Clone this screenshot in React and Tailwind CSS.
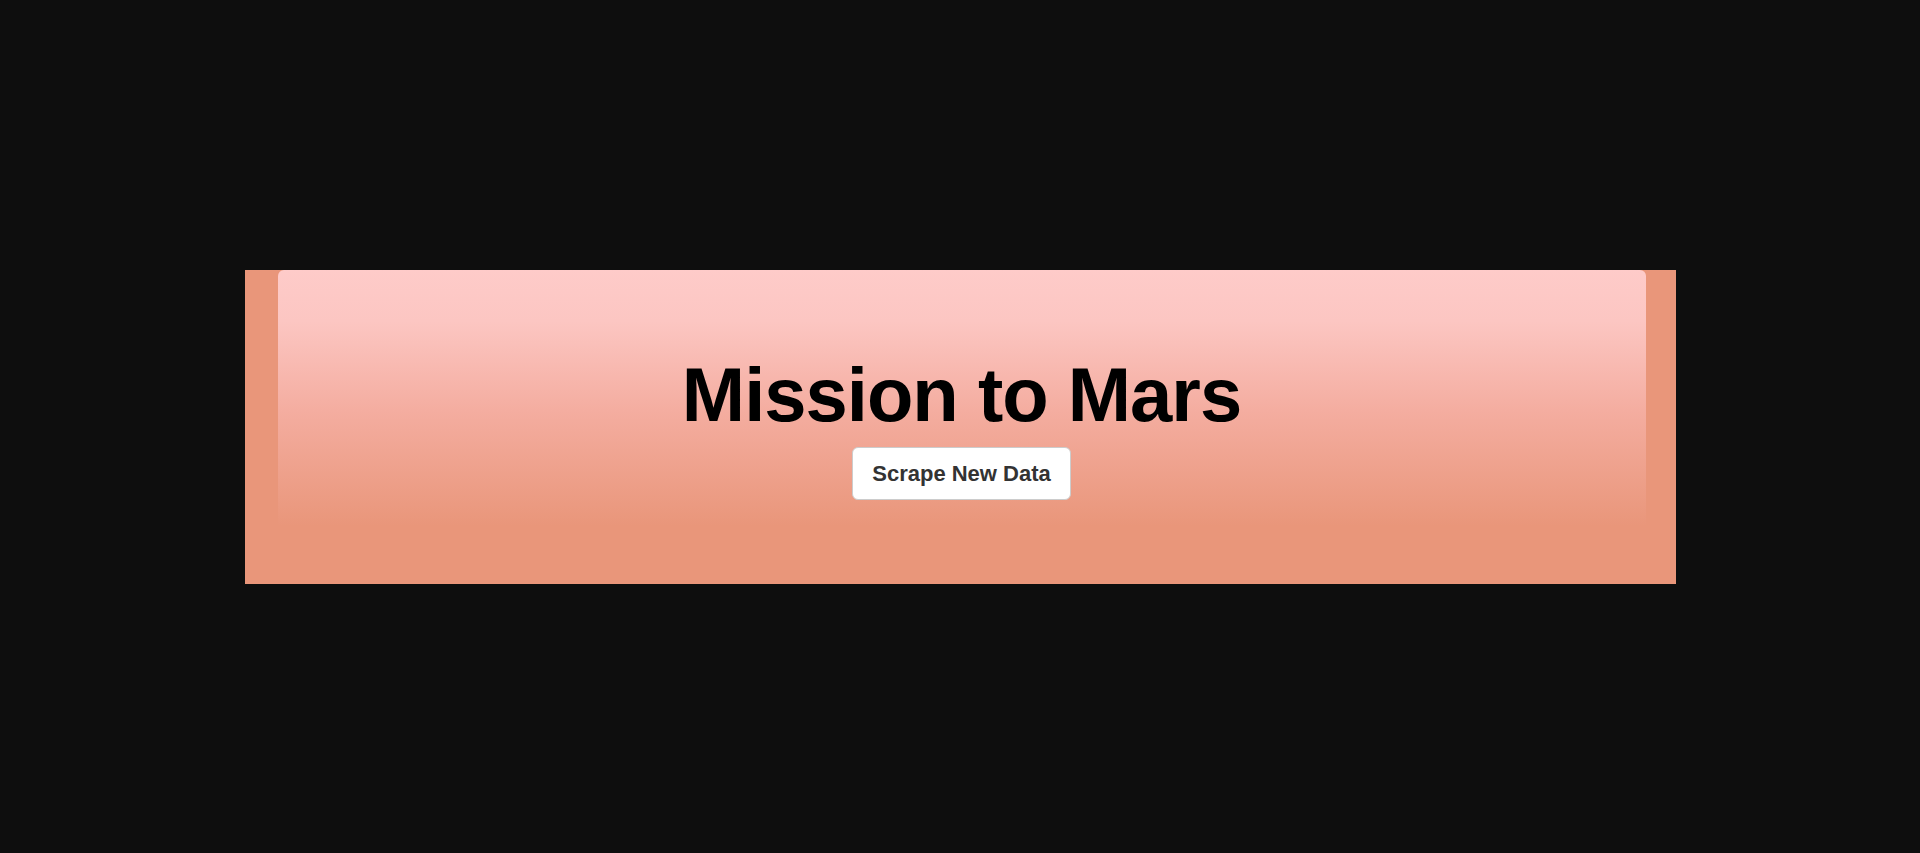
export default function App() {
  return (
    <div className="min-h-screen w-full bg-[#0e0e0e] flex items-center justify-center" style={{ fontFamily: '"Liberation Sans", Arial, sans-serif' }}>
      <div className="w-[1431px] h-[314px] bg-[#e9967a] pl-[33px] pr-[30px]">
        <div className="h-[256px] rounded-t-[6px] bg-[linear-gradient(to_bottom,#fecbc9_0%,#fcc6c2_20%,#f4ada0_55%,#e9967a_100%)] flex flex-col items-center pt-[87px]">
          <h1 className="text-[76px] leading-[76px] font-bold tracking-[-1px] text-black">Mission to Mars</h1>
          <button className="mt-[14px] w-[219px] h-[53px] bg-white border border-[#cccccc] rounded-[6px] text-[22px] font-bold text-[#333333] flex items-center justify-center">
            Scrape New Data
          </button>
        </div>
      </div>
    </div>
  );
}
